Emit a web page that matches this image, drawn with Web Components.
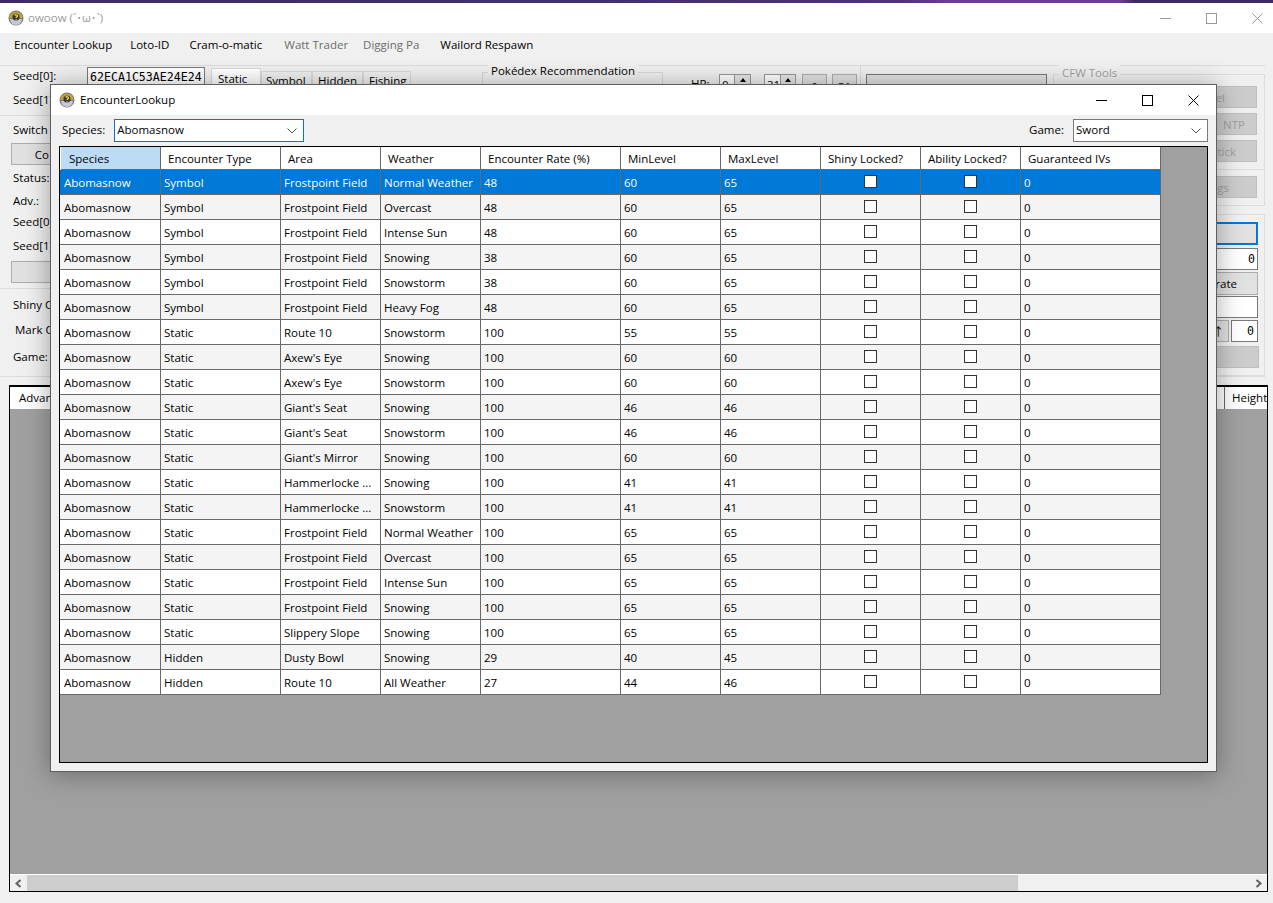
<!DOCTYPE html>
<html>
<head>
<meta charset="utf-8">
<title>owoow</title>
<style>
  html, body { margin: 0; height: 100%; overflow: hidden; }
  body { font: 11.5px "Open Sans", "Noto Sans", "Noto Sans CJK JP", sans-serif; color: #000; }
</style>
</head>
<body>
<main-form></main-form>
<script>
const ICON = `<svg width="16" height="16" viewBox="0 0 16 16">
  <circle cx="8" cy="8" r="7.5" fill="#77777f"/>
  <path d="M1.5 8a6.5 6.5 0 0 1 13 0z" fill="#c9a52c"/>
  <path d="M2 9h12a6 6 0 0 1-12 0z" fill="#c8c8d4"/>
  <circle cx="8" cy="7" r="3.6" fill="#39393f"/>
  <path d="M6.6 5.4c.8-1 2.8-.8 2.9.5 0 1-1.400 1-1.400 2M8.100 9.200v.7" fill="none" stroke="#f2cf4a" stroke-width="1.300"/>
</svg>`

// window caption with the three system buttons
class TitleBar extends HTMLElement {
    connectedCallback() {
        this.attachShadow({ mode: 'open' })
        const idle = this.hasAttribute('inactive')
        this.shadowRoot.innerHTML = `
            <style>
                :host { display: flex; align-items: center; height: 30px; background: #fff; overflow: hidden;
                    color: ${idle ? '#999' : '#000'}; }
                .icon { display: flex; margin-left: 8px; margin-right: var(--icon-gap, 5px); }
                .text { flex: 1; white-space: nowrap; margin-top: -2px; }
                .btn { width: 46px; height: 30px; display: flex; align-items: center; justify-content: center; flex: none; }
                svg.g { stroke: ${idle ? '#999' : '#000'}; fill: none; stroke-width: 1; }
                .btns { display: flex; margin-right: var(--btn-right, 0); }
            </style>
            <span class="icon">${ICON}</span>
            <span class="text">${this.getAttribute('text') ?? ''}</span>
            <div class="btns">
                <div class="btn"><svg class="g" width="11" height="11"><path d="M0 5.500H11"/></svg></div>
                <div class="btn"><svg class="g" width="11" height="11"><rect x=".5" y=".5" width="10" height="10"/></svg></div>
                <div class="btn"><svg class="g" width="11" height="11"><path d="M.5.5l10 10M10.500.5l-10 10"/></svg></div>
            </div>
        `
    }
}

// flat winforms button, "tone" picks plain / off / focus
class PushButton extends HTMLElement {
    connectedCallback() {
        this.attachShadow({ mode: 'open' })
        this.shadowRoot.innerHTML = `
            <style>
                :host { display: flex; box-sizing: border-box; align-items: center; justify-content: center;
                    background: #e1e1e1; border: 1px solid #adadad; height: 22px; white-space: nowrap; overflow: hidden; }
                :host([tone="off"]) { background: #ccc; border-color: #bfbfbf; color: #a0a0a0; }
                :host([tone="focus"]) { background: #e1e1e1; border: 2px solid #0078d7; height: 23px; }
                :host([tone="dark"]) { background: #e1e1e1; border-color: #777; }
                :host([end]) { justify-content: flex-end; padding-right: var(--end-pad, 10px); }
            </style>
            <slot></slot>
        `
    }
}

class TextField extends HTMLElement {
    connectedCallback() {
        this.attachShadow({ mode: 'open' })
        this.shadowRoot.innerHTML = `
            <style>
                :host { display: flex; box-sizing: border-box; align-items: center; background: #fff;
                    border: 1px solid #7a7a7a; height: 22px; padding: 0 2px;
                    font: 11.6px "DejaVu Sans Mono", "Liberation Mono", monospace; white-space: nowrap; overflow: hidden; }
                :host([end]) { justify-content: flex-end; }
            </style>
            <slot></slot>
        `
    }
}

class ComboBox extends HTMLElement {
    connectedCallback() {
        this.attachShadow({ mode: 'open' })
        this.shadowRoot.innerHTML = `
            <style>
                :host { display: flex; box-sizing: border-box; align-items: center; background: #fff;
                    border: 1px solid #7a7a7a; height: 23px; padding: 0 6px 0 2px; }
                :host([focused]) { border-color: #0078d7; }
                span { flex: 1; margin-top: -2px; }
            </style>
            <span><slot></slot></span>
            <svg width="10" height="6" fill="none" stroke="#555"><path d="M.5.5l4.500 4.500 4.500-4.500"/></svg>
        `
    }
}

class GridCheck extends HTMLElement {
    connectedCallback() {
        this.attachShadow({ mode: 'open' })
        this.shadowRoot.innerHTML = `
            <style>
                :host { display: block; box-sizing: border-box; width: 13px; height: 13px; margin: 3px auto 0;
                    background: #fff; border: 1px solid #333; }
            </style>
        `
    }
}

const COLS = [
    ['Species', 101], ['Encounter Type', 120], ['Area', 100], ['Weather', 100],
    ['Encounter Rate (%)', 140], ['MinLevel', 100], ['MaxLevel', 100],
    ['Shiny Locked?', 100], ['Ability Locked?', 100], ['Guaranteed IVs', 140]
]

const ROWS = [
    ['Symbol', 'Frostpoint Field', 'Normal Weather', 48, 60, 65],
    ['Symbol', 'Frostpoint Field', 'Overcast', 48, 60, 65],
    ['Symbol', 'Frostpoint Field', 'Intense Sun', 48, 60, 65],
    ['Symbol', 'Frostpoint Field', 'Snowing', 38, 60, 65],
    ['Symbol', 'Frostpoint Field', 'Snowstorm', 38, 60, 65],
    ['Symbol', 'Frostpoint Field', 'Heavy Fog', 48, 60, 65],
    ['Static', 'Route 10', 'Snowstorm', 100, 55, 55],
    ['Static', "Axew's Eye", 'Snowing', 100, 60, 60],
    ['Static', "Axew's Eye", 'Snowstorm', 100, 60, 60],
    ['Static', "Giant's Seat", 'Snowing', 100, 46, 46],
    ['Static', "Giant's Seat", 'Snowstorm', 100, 46, 46],
    ['Static', "Giant's Mirror", 'Snowing', 100, 60, 60],
    ['Static', 'Hammerlocke ...', 'Snowing', 100, 41, 41],
    ['Static', 'Hammerlocke ...', 'Snowstorm', 100, 41, 41],
    ['Static', 'Frostpoint Field', 'Normal Weather', 100, 65, 65],
    ['Static', 'Frostpoint Field', 'Overcast', 100, 65, 65],
    ['Static', 'Frostpoint Field', 'Intense Sun', 100, 65, 65],
    ['Static', 'Frostpoint Field', 'Snowing', 100, 65, 65],
    ['Static', 'Slippery Slope', 'Snowing', 100, 65, 65],
    ['Hidden', 'Dusty Bowl', 'Snowing', 29, 40, 45],
    ['Hidden', 'Route 10', 'All Weather', 27, 44, 46]
]

class EncounterGrid extends HTMLElement {
    connectedCallback() {
        this.attachShadow({ mode: 'open' })
        const tpl = COLS.map(c => c[1] + 'px').join(' ')
        const head = COLS.map((c, i) => `<div class="h${i ? '' : ' sel'}">${c[0]}</div>`).join('')
        const rows = ROWS.map((r, i) => `
            <div class="row ${i === 0 ? 'cur' : i % 2 ? 'alt' : ''}">
                <div class="c first">Abomasnow</div>
                ${r.map(v => `<div class="c">${v}</div>`).join('')}
                <div class="c box"><grid-check></grid-check></div>
                <div class="c box"><grid-check></grid-check></div>
                <div class="c">0</div>
            </div>`).join('')
        this.shadowRoot.innerHTML = `
            <style>
                :host { display: block; flex: 1; background: #a0a0a0; border: 1px solid #000; overflow: hidden; white-space: nowrap; }
                .head, .row { display: grid; grid-template-columns: ${tpl}; width: 1101px; background: #fff; }
                .head { height: 23px; }
                .h { box-sizing: border-box; padding: 2px 0 0 7px; border-right: 1px solid #696969; border-bottom: 1px solid #696969; line-height: 20px; }
                .h.sel { background: #bcdcf4; padding-left: 8px; margin-left: 1px; }
                .row { height: 25px; }
                .row.alt { background: #f4f4f4; }
                .row.cur { background: #0078d7; color: #fff; }
                .c { box-sizing: border-box; padding: 2px 0 0 3px; border-right: 1px solid #696969; border-bottom: 1px solid #696969; line-height: 22px; overflow: hidden; }
                .c.first { padding-left: 4px; }
                .c.box { padding: 2px 0 0; }
            </style>
            <div class="head">${head}</div>
            ${rows}
        `
    }
}

// the floating lookup window
class LookupDialog extends HTMLElement {
    connectedCallback() {
        this.attachShadow({ mode: 'open' })
        this.shadowRoot.innerHTML = `
            <style>
                :host { position: absolute; left: 50px; top: 84px; width: 1167px; height: 688px; box-sizing: border-box;
                    display: flex; flex-direction: column; background: #f0f0f0; border: 1px solid #5f5f5f;
                    box-shadow: 0 2px 24px rgba(0,0,0,.35); }
                .bar { display: flex; align-items: flex-start; height: 31px; box-sizing: border-box; padding: 4px 8px 0 11px; flex: none; }
                .bar span.l { margin-right: 9px; line-height: 21px; }
                combo-box.sp { width: 190px; }
                combo-box.gm { width: 135px; }
                .sp-gap { flex: 1; }
                .body { flex: 1; display: flex; margin: 0 8px 8px; min-height: 0; }
            </style>
            <title-bar text="EncounterLookup"></title-bar>
            <div class="bar">
                <span class="l">Species:</span>
                <combo-box class="sp" focused>Abomasnow</combo-box>
                <span class="sp-gap"></span>
                <span class="l">Game:</span>
                <combo-box class="gm">Sword</combo-box>
            </div>
            <div class="body"><encounter-grid></encounter-grid></div>
        `
    }
}

class SpinBox extends HTMLElement {
    connectedCallback() {
        this.attachShadow({ mode: 'open' })
        this.shadowRoot.innerHTML = `
            <style>
                :host { display: flex; box-sizing: border-box; width: 32px; height: 22px; background: #fff;
                    border: 1px solid #999; padding-left: 2px; line-height: 20px; justify-content: space-between; }
                i { width: 15px; height: 9px; border-left: 1px solid #999; border-bottom: 1px solid #999; background: #e6e6e6;
                    display: flex; align-items: center; justify-content: center; }
                i::after { content: ""; border: 3px solid transparent; border-top: 0; border-bottom: 4px solid #000; }
            </style>
            <slot></slot><i></i>
        `
    }
}

class MainForm extends HTMLElement {
    connectedCallback() {
        this.attachShadow({ mode: 'open' })
        this.shadowRoot.innerHTML = `
            <style>
                :host { display: flex; flex-direction: column; position: relative; width: 1273px; height: 903px; background: #f0f0f0; overflow: hidden; }
                .strip { height: 3px; flex: none; background: linear-gradient(90deg, #3d2a66 0, #43306e 620px, #4f2f84 900px, #6a3da0 950px, #6a3da0 1120px, #3e2a66 1135px, #3e2a66 100%); }
                title-bar { --btn-right: -7px; --icon-gap: 4px; flex: none; }
                .menu { display: flex; height: 33px; align-items: center; flex: none; padding: 0 0 10px 14px; border-bottom: 1px solid #dcdcdc; margin-right: 8px; box-sizing: border-box; }
                .menu span { white-space: nowrap; }
                .menu .off { color: #6d6d6d; }
                .top { display: flex; height: 310px; flex: none; border-bottom: 1px solid #dcdcdc; margin-right: 8px; }
                .left { width: 209px; flex: none; display: flex; flex-direction: column; }
                .sec { border-bottom: 1px solid #dcdcdc; display: flex; flex-direction: column; }
                .l { height: 20px; line-height: 20px; margin-left: 13px; white-space: nowrap; }
                .seedrow { display: flex; height: 20px; align-items: flex-start; }
                .seedrow text-field { margin-left: auto; width: 118px; margin-right: 4px; height: 20px; margin-top: 1px; padding-bottom: 1px; }
                .mid { width: 273px; flex: none; }
                .tabs { display: flex; align-items: flex-start; margin: 2px 0 0 2px; }
                .tab { box-sizing: border-box; border: 1px solid #d9d9d9; border-bottom: 0; background: #f0f0f0; height: 16px; margin-top: 3px; padding-left: var(--p); line-height: 18px; overflow: hidden; white-space: nowrap; }
                .tab.on { background: #fff; height: 18px; margin-top: 0; line-height: 20px; }
                .dex { width: 181px; flex: none; margin: 6px 0 0 0; height: 40px; border: 1px solid #d9d9d9; border-bottom: 0; box-sizing: border-box; }
                .legend { display: inline-block; background: #f0f0f0; padding: 0 3px; margin-left: 5px; position: relative; top: -10px; line-height: 16px; white-space: nowrap; }
                .hp { display: flex; margin-left: 28px; padding-top: 8px; align-items: flex-start; flex: none; width: 169px; }
                .hp span.t { width: 28px; line-height: 20px; }
                .hp span.d { width: 13px; text-align: center; line-height: 20px; }
                .hp push-button { width: 25px; margin-left: 6px; height: 24px; }
                .sep { width: 1px; background: #dcdcdc; flex: none; }
                .big { width: 181px; height: 40px; margin: 8px 0 0 5px; flex: none; }
                .right { width: 212px; margin-left: 6px; flex: none; display: flex; flex-direction: column; }
                .cfw { border: 1px solid #dcdcdc; margin-top: 8px; height: 97px; box-sizing: border-box; display: flex; flex-direction: column; align-items: flex-end; padding-right: 7px; gap: 5px; }
                .cfw .legend { color: #a0a0a0; align-self: flex-start; margin-bottom: -6px; height: 12px; margin-left: 5px; top: -10px; }
                .cfw push-button { width: 120px; }
                .cfw2 { border: 1px solid #dcdcdc; border-top: 0; height: 36px; box-sizing: border-box; padding: 6px 7px 0 0; display: flex; justify-content: flex-end; }
                .cfw2 push-button { width: 120px; }
                .gen { border: 1px solid #dcdcdc; margin-top: 8px; height: 162px; flex: none; box-sizing: border-box; display: flex; flex-direction: column; padding: 7px 6px 0 0; align-items: flex-end; }
                .gen > * { width: 120px; }
                .adv { display: flex; justify-content: flex-end; gap: 2px; }
                .adv push-button { flex: 1; }
                .adv text-field { width: 27px; padding: 0 3px; flex: none; }
                .results { flex: 1; margin: 8px 5px 11px 9px; border: 1px solid #000; display: flex; flex-direction: column; background: #a0a0a0; min-height: 0; }
                .rhead { display: flex; height: 23px; background: #fff; flex: none; border-top: 1px solid #000; box-sizing: border-box; line-height: 21px; }
                .rhead div { border-right: 1px solid #696969; padding-left: 9px; box-sizing: border-box; overflow: hidden; white-space: nowrap; }
                .rhead .fill { flex: 1; padding: 0; }
                .rbody { flex: 1; }
                .sb { display: flex; height: 16px; flex: none; background: #f0f0f0; border-top: 1px solid #fff; align-items: stretch; }
                .sb .arr { width: 17px; display: flex; align-items: center; justify-content: center; }
                .thumb { width: 991px; background: #cdcdcd; }
                .track { flex: 1; }
            </style>
            <div class="strip"></div>
            <title-bar inactive text="owoow (´･ω･\`)"></title-bar>
            <div class="menu">
                <span>Encounter Lookup</span>
                <span style="margin-left:18px">Loto-ID</span>
                <span style="margin-left:20px">Cram-o-matic</span>
                <span class="off" style="margin-left:22px">Watt Trader</span>
                <span class="off" style="margin-left:15px">Digging Pa</span>
                <span style="margin-left:21px">Wailord Respawn</span>
            </div>
            <div class="top">
                <div class="left">
                    <div class="sec" style="height:49px">
                        <div class="seedrow"><div class="l">Seed[0]:</div><text-field>62ECA1C53AE24E24</text-field></div>
                        <div class="l" style="margin-top:4px">Seed[1]:</div>
                    </div>
                    <div class="sec" style="height:172px">
                        <div class="l" style="margin-top:4px">Switch</div>
                        <push-button end style="margin:3px 0 0 11px;width:90px;--end-pad:51px">Co</push-button>
                        <div class="l" style="margin-top:3px">Status:</div>
                        <div class="l" style="margin-top:3px">Adv.:</div>
                        <div class="l" style="margin-top:1px">Seed[0]:</div>
                        <div class="l" style="margin-top:4px">Seed[1]:</div>
                        <push-button style="margin:5px 0 0 11px;width:90px"></push-button>
                    </div>
                    <div style="display:flex;flex-direction:column">
                        <div class="l" style="margin-top:6px">Shiny C</div>
                        <div class="l" style="margin:5px 0 0 15px">Mark C</div>
                        <div class="l" style="margin-top:7px">Game:</div>
                    </div>
                </div>
                <div class="mid">
                    <div class="tabs">
                        <div class="tab on" style="width:50px;--p:6px">Static</div>
                        <div class="tab" style="width:51px;--p:4px">Symbol</div>
                        <div class="tab" style="width:51px;--p:5px">Hidden</div>
                        <div class="tab" style="width:48px;--p:5px">Fishing</div>
                    </div>
                </div>
                <div class="dex"><span class="legend">Pokédex Recommendation</span></div>
                <div class="hp">
                    <span class="t">HP:</span><spin-box>0</spin-box><span class="d">-</span><spin-box>31</spin-box>
                    <push-button>0</push-button><push-button style="margin-left:5px">31</push-button>
                </div>
                <div class="sep"></div>
                <push-button tone="dark" class="big"></push-button>
                <div class="right">
                    <div class="cfw">
                        <span class="legend">CFW Tools</span>
                        <push-button tone="off" end style="--end-pad:31px">el</push-button>
                        <push-button tone="off" end style="--end-pad:11px">NTP</push-button>
                        <push-button tone="off" end style="--end-pad:20px">tick</push-button>
                    </div>
                    <div class="cfw2"><push-button tone="off" end style="--end-pad:27px">ngs</push-button></div>
                    <div class="gen">
                        <push-button tone="focus"></push-button>
                        <text-field end style="margin-top:3px">0</text-field>
                        <push-button end style="margin-top:2px;height:23px;--end-pad:20px">rate</push-button>
                        <text-field style="margin-top:1px"></text-field>
                        <div class="adv" style="margin-top:2px"><push-button end style="--end-pad:4px">↑</push-button><text-field end>0</text-field></div>
                        <push-button tone="off" style="margin-top:4px;width:121px;margin-right:-1px"></push-button>
                    </div>
                </div>
            </div>
            <div class="results">
                <div class="rhead">
                    <div style="width:100px">Advan</div>
                    <div class="fill"></div>
                    <div style="width:42px;border:0;padding-left:7px">Height</div>
                </div>
                <div class="rbody"></div>
                <div class="sb">
                    <div class="arr"><svg width="9" height="9" fill="none" stroke="#606060" stroke-width="2"><path d="M6.500 1l-4 3.500 4 3.500"/></svg></div>
                    <div class="thumb"></div>
                    <div class="track"></div>
                    <div class="arr"><svg width="9" height="9" fill="none" stroke="#606060" stroke-width="2"><path d="M2.500 1l4 3.500-4 3.500"/></svg></div>
                </div>
            </div>
            <lookup-dialog></lookup-dialog>
        `
    }
}

customElements.define('title-bar', TitleBar)
customElements.define('push-button', PushButton)
customElements.define('text-field', TextField)
customElements.define('combo-box', ComboBox)
customElements.define('grid-check', GridCheck)
customElements.define('spin-box', SpinBox)
customElements.define('encounter-grid', EncounterGrid)
customElements.define('lookup-dialog', LookupDialog)
customElements.define('main-form', MainForm)
</script>
</body>
</html>
